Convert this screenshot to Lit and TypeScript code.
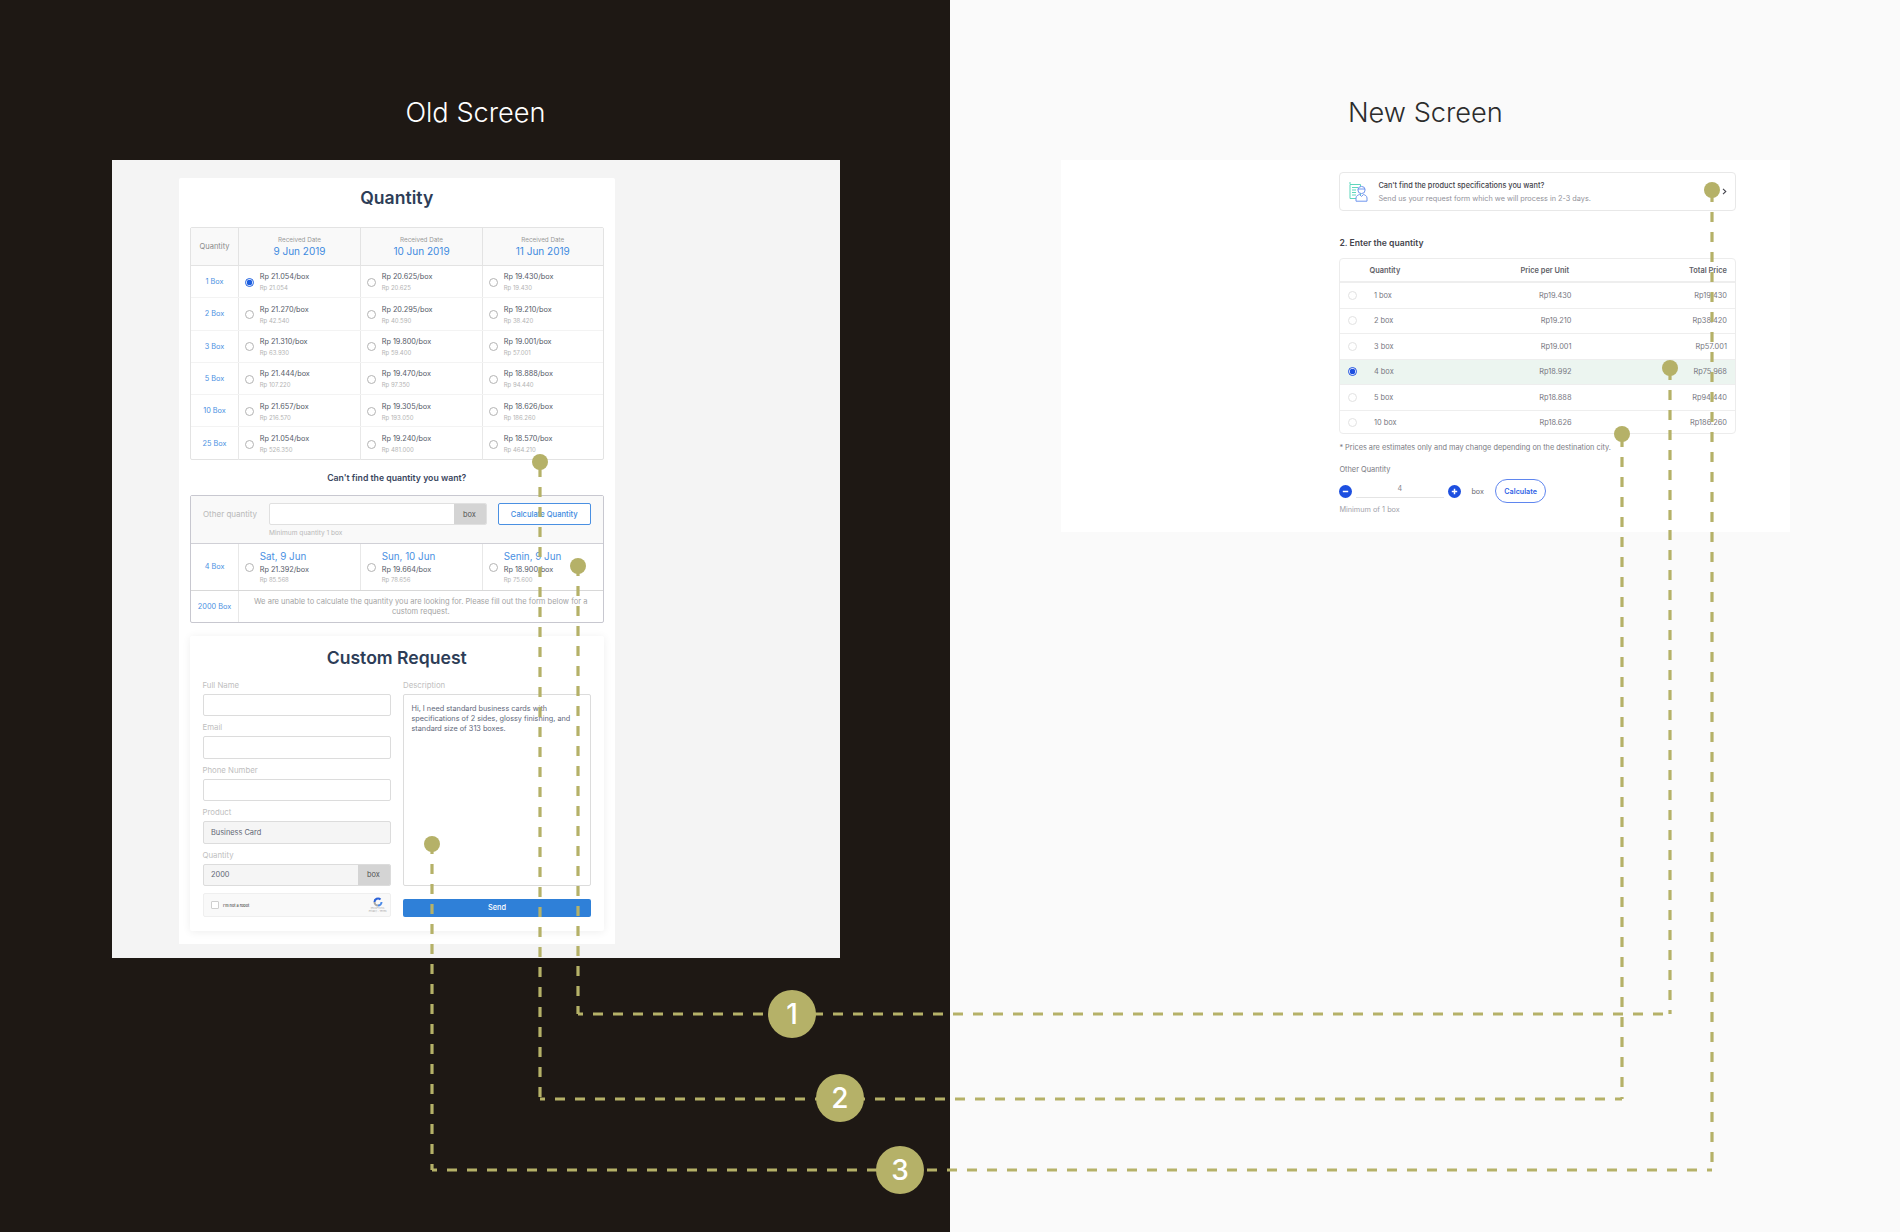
import { LitElement, html, css, svg } from "lit";
import { customElement } from "lit/decorators.js";

const oldRows = [
  ["1 Box", ["Rp 21.054/box", "Rp 21.054"], ["Rp 20.625/box", "Rp 20.625"], ["Rp 19.430/box", "Rp 19.430"]],
  ["2 Box", ["Rp 21.270/box", "Rp 42.540"], ["Rp 20.295/box", "Rp 40.590"], ["Rp 19.210/box", "Rp 38.420"]],
  ["3 Box", ["Rp 21.310/box", "Rp 63.930"], ["Rp 19.800/box", "Rp 59.400"], ["Rp 19.001/box", "Rp 57.001"]],
  ["5 Box", ["Rp 21.444/box", "Rp 107.220"], ["Rp 19.470/box", "Rp 97.350"], ["Rp 18.888/box", "Rp 94.440"]],
  ["10 Box", ["Rp 21.657/box", "Rp 216.570"], ["Rp 19.305/box", "Rp 193.050"], ["Rp 18.626/box", "Rp 186.260"]],
  ["25 Box", ["Rp 21.054/box", "Rp 526.350"], ["Rp 19.240/box", "Rp 481.000"], ["Rp 18.570/box", "Rp 464.210"]],
] as any[];

const newRows = [
  ["1 box", "Rp19.430", "Rp19.430"],
  ["2 box", "Rp19.210", "Rp38.420"],
  ["3 box", "Rp19.001", "Rp57.001"],
  ["4 box", "Rp18.992", "Rp75.968"],
  ["5 box", "Rp18.888", "Rp94.440"],
  ["10 box", "Rp18.626", "Rp186.260"],
];

const C = "#b5b168";
const leg = (d: string, offset = 0) =>
  svg`<path d=${d} fill="none" stroke=${C} stroke-width="3.2" stroke-dasharray="10 10" stroke-dashoffset=${offset}></path>`;
const pin = (x: number, y: number) => svg`<circle cx=${x} cy=${y} r="8" fill=${C}></circle>`;
const badge = (x: number, y: number, n: string) => svg`
  <circle cx=${x} cy=${y} r="24" fill=${C}></circle>
  <text x=${x} y=${y + 10} text-anchor="middle" fill="#fff" font-family="Inter, sans-serif" font-size="28" font-weight="500">${n}</text>`;

@customElement("app-root")
export class AppRoot extends LitElement {
  static styles = css`
    :host { display: block; width: 1900px; height: 1232px; position: relative; overflow: hidden; font-family: Inter, "Liberation Sans", sans-serif; }
    * { box-sizing: border-box; }
    .page { display: grid; grid-template-columns: 950px 950px; height: 1232px; }
    .side { height: 1232px; }
    .old { background: #1e1814; padding-left: 112px; }
    .new { background: #fafafa; padding-left: 111.4px; }
    .title { height: 160px; padding-top: 95.5px; font-size: 27.2px; line-height: 34px; font-weight: 300; text-align: center; color: #fff; }
    .old .title { width: 727px; }
    .new .title { width: 728px; color: #2c2c2c; }

    .oldpanel { width: 728px; height: 798px; background: #f4f4f4; padding: 18px 0 0 66.5px; }
    .card { width: 436.5px; height: 766px; background: #fff; padding: 0 11.5px 0 11.5px; border-radius: 2px 2px 0 0; }
    h2 { margin: 0; text-align: center; font-weight: 600; color: #2d3d57; font-size: 17.6px; height: 49px; line-height: 40px; }
    .grid { display: grid; grid-template-columns: 47px 122px 122px 1fr; }
    .tbl { border: 1px solid #e3e3e3; border-radius: 2px; height: 232.6px; }
    .thead { height: 38px; background: #f9f9f9; border-bottom: 1px solid #e3e3e3; }
    .thead > div { display: flex; flex-direction: column; align-items: center; justify-content: center; }
    .thead > div + div { border-left: 1px solid #e3e3e3; }
    .q { font-size: 7.5px; color: #8a8a8a; }
    .rd { font-size: 6.3px; line-height: 10px; color: #9a9a9a; }
    .dt { font-size: 10px; line-height: 13px; color: #3d8ae0; }
    .row { height: 32.3px; border-bottom: 1px solid #f3f3f3; }
    .row:last-child { border-bottom: 0; }
    .box { display: flex; align-items: center; justify-content: center; font-size: 7.3px; color: #4a90e2; height: 100%; }
    .cell { display: flex; align-items: center; gap: 6.2px; padding: 1.5px 0 0 5.5px; border-left: 1px solid #e8e8e8; height: 100%; }
    .radio { flex: none; width: 9px; height: 9px; border-radius: 50%; border: 1px solid #b4b4b4; background: #fff; display: block; }
    .radio.on { border-color: #1d5fe0; background: radial-gradient(circle, #1d5fe0 0 2.6px, #fff 3.1px); }
    .main { font-size: 7.3px; line-height: 11px; color: #555a68; white-space: nowrap; }
    .sub { font-size: 6px; line-height: 11px; color: #b4b4b4; white-space: nowrap; }

    .ask { height: 35px; line-height: 36px; text-align: center; font-size: 8.7px; font-weight: 600; color: #3a4660; }
    .other { border: 1px solid #c8c8d0; border-radius: 2px; height: 128px; }
    .orow { height: 48px; background: #f9f9f9; border-bottom: 1px solid #d0d0d6; display: flex; padding: 7.5px 0 0 12px; }
    .olabel { width: 66px; height: 22px; line-height: 22px; font-size: 8px; color: #b8b8b8; white-space: nowrap; }
    .ofield { width: 217.5px; }
    .inp { display: flex; height: 22px; background: #fff; border: 1px solid #e0e0e0; border-radius: 2px; overflow: hidden; }
    .inp i { flex: 1; }
    .unit { width: 32px; background: #d4d4d4; display: flex; align-items: center; justify-content: center; font-size: 7.4px; font-style: normal; color: #555; }
    .min { font-size: 6.6px; line-height: 14px; color: #b8b8b8; margin-top: 0.5px; }
    .calc { margin-left: 11.5px; width: 92.5px; height: 22px; border: 1px solid #4a90e2; border-radius: 2px; display: flex; align-items: center; justify-content: center; font-size: 7.6px; font-weight: 500; color: #3d8ae0; background: #fff; }
    .row4 { height: 47px; border-bottom: 1px solid #d8d8d8; }
    .date { font-size: 9.8px; line-height: 13px; color: #4a90e2; white-space: nowrap; }
    .row4 .main { margin-top: 1px; }
    .row4 .sub { line-height: 10px; }
    .row2k { height: 31px; }
    .msg { grid-column: 2 / 5; border-left: 1px solid #e8e8e8; display: flex; align-items: center; justify-content: center; text-align: center; padding: 1px 8px 0; font-size: 7.55px; line-height: 10px; color: #a4a4a4; }

    .custom { margin-top: 13px; height: 295px; background: #fff; border-radius: 2px; box-shadow: 0 1px 8px rgba(0,0,0,.07); padding: 0 12.5px; }
    .custom h2 { height: 42px; line-height: 42px; padding-top: 1px; font-size: 17.6px; }
    .form { display: grid; grid-template-columns: 188px 188px; column-gap: 12.5px; }
    .field { height: 42.5px; }
    .lbl { display: block; font-size: 7.8px; height: 16px; line-height: 15px; color: #c0c0c0; }
    .text { height: 22.5px; border: 1px solid #dcdcdc; border-radius: 2px; background: #fff; display: flex; align-items: center; overflow: hidden; font-size: 7.4px; color: #5f6674; padding-left: 7.5px; }
    .text.dis { background: #f5f5f5; }
    .text.dis .u2 { margin-left: auto; width: 32px; height: 100%; background: #d4d4d4; display: flex; align-items: center; justify-content: center; color: #555; }
    .captcha { margin-top: 3px; height: 24px; background: #f9f9f9; border: 1px solid #efefef; border-radius: 2px; display: flex; align-items: center; padding: 0 3px 0 7px; }
    .check { width: 8px; height: 8px; border: 1px solid #cfcfcf; background: #fff; border-radius: 1px; }
    .robot { margin-left: 4.5px; font-size: 3.8px; color: #444; font-weight: 500; white-space: nowrap; }
    .cap { margin-left: auto; display: flex; flex-direction: column; align-items: center; }
    .cap span { font-size: 2.4px; line-height: 3px; color: #a8a8a8; white-space: nowrap; }
    .area { height: 192px; border: 1px solid #dcdcdc; border-radius: 2px; background: #fff; padding: 9px 7px 0 7.5px; font-size: 7.3px; line-height: 10px; color: #60677a; }
    .send { margin-top: 13px; height: 18px; background: #2f80d8; border-radius: 2px; color: #fff; display: flex; align-items: center; justify-content: center; font-size: 7.4px; font-weight: 500; }

    .newpanel { width: 728.6px; height: 372px; background: #fff; padding: 12px 0 0 278px; }
    .wrap { width: 397px; }
    .banner { height: 38.5px; border: 1px solid #e8e8e8; border-radius: 4px; display: flex; align-items: center; padding: 1px 8px 0 9px; }
    .btext { margin-left: 9px; flex: 1; }
    .b1 { font-size: 7.35px; line-height: 13px; font-weight: 500; color: #44444c; white-space: nowrap; }
    .b2 { font-size: 7.3px; line-height: 13px; color: #92929a; white-space: nowrap; }
    .chev { display: block; }
    .head2 { height: 47.5px; padding-top: 25.5px; font-size: 8.6px; line-height: 14px; font-weight: 600; color: #44444c; }
    .ntbl { height: 176px; border: 1px solid #ececec; border-radius: 4px; overflow: hidden; }
    .nrow { height: 25.5px; display: grid; grid-template-columns: 1fr auto; align-items: center; border-top: 1px solid #eee; padding-right: 8.5px; font-size: 7.4px; color: #787882; }
    .nhead { height: 23px; border-top: 0; border-bottom: 1px solid #eee; font-weight: 600; color: #5f5f68; }
    .nrow > div { text-align: right; }
    .nrow > .ql { text-align: left; display: flex; align-items: center; }
    .nrow.sel { background: #ecf5f0; }
    .nrow .radio { margin-left: 8px; border-color: #e2e2e2; }
    .nrow .radio.on { border-color: #1d4fe0; background: radial-gradient(circle, #1d4fe0 0 2.6px, #fff 3.1px); }
    .q1 { margin-left: 16.6px; width: 197.5px; display: flex; justify-content: space-between; }
    .qh { margin-left: 29.2px; width: 199.5px; display: flex; justify-content: space-between; }
    .note { margin-top: 8px; font-size: 7.33px; line-height: 12px; color: #7a7a82; white-space: nowrap; }
    .olab { margin-top: 10px; font-size: 7.4px; line-height: 12px; color: #7a7a82; }
    .ctrl { margin-top: 3px; height: 24px; display: flex; align-items: center; }
    .pm { flex: none; width: 13px; height: 13px; border-radius: 50%; background: #1d4fe0; display: block; }
    .num { margin-left: 3.5px; margin-right: 4px; width: 88px; height: 14px; border-bottom: 1px solid #e4e4e4; text-align: center; font-size: 7.2px; line-height: 10px; color: #85858d; }
    .bx { margin-left: 10.5px; width: 13px; font-size: 7.2px; color: #6a6a72; }
    .cbtn { margin-left: 10.5px; width: 51.5px; height: 24px; border: 1px solid #5f86ef; border-radius: 12px; display: flex; align-items: center; justify-content: center; font-size: 7.2px; font-weight: 600; color: #2f5fe6; }
    .min2 { margin-top: 1px; font-size: 7.3px; line-height: 12px; color: #a2a2aa; }
    .over { position: absolute; left: 0; top: 0; pointer-events: none; }
  `;

  private oldTable() {
    return html`<div class="tbl">
      <div class="grid thead">
        <div class="q">Quantity</div>
        ${["9 Jun 2019", "10 Jun 2019", "11 Jun 2019"].map(
          (d) => html`<div><span class="rd">Received Date</span><span class="dt">${d}</span></div>`
        )}
      </div>
      ${oldRows.map(
        (r, i) => html`<div class="grid row">
          <div class="box">${r[0]}</div>
          ${[r[1], r[2], r[3]].map(
            (c: string[], j: number) => html`<div class="cell">
              <span class="radio ${i === 0 && j === 0 ? "on" : ""}"></span>
              <div><div class="main">${c[0]}</div><div class="sub">${c[1]}</div></div>
            </div>`
          )}
        </div>`
      )}
    </div>`;
  }

  private otherBox() {
    const four = [
      ["Sat, 9 Jun", "Rp 21.392/box", "Rp 85.568"],
      ["Sun, 10 Jun", "Rp 19.664/box", "Rp 78.656"],
      ["Senin, 9 Jun", "Rp 18.900/box", "Rp 75.600"],
    ];
    return html`<div class="other">
      <div class="orow">
        <div class="olabel">Other quantity</div>
        <div class="ofield">
          <div class="inp"><i></i><em class="unit">box</em></div>
          <div class="min">Minimum quantity 1 box</div>
        </div>
        <div class="calc">Calculate Quantity</div>
      </div>
      <div class="grid row4">
        <div class="box">4 Box</div>
        ${four.map(
          (c) => html`<div class="cell">
            <span class="radio"></span>
            <div><div class="date">${c[0]}</div><div class="main">${c[1]}</div><div class="sub">${c[2]}</div></div>
          </div>`
        )}
      </div>
      <div class="grid row2k">
        <div class="box">2000 Box</div>
        <div class="msg">We are unable to calculate the quantity you are looking for. Please fill out the form below for a custom request.</div>
      </div>
    </div>`;
  }

  private customForm() {
    const f = (label: string, inner: unknown = html``, cls = "") =>
      html`<div class="field"><span class="lbl">${label}</span><div class="text ${cls}">${inner}</div></div>`;
    return html`<div class="custom">
      <h2>Custom Request</h2>
      <div class="form">
        <div>
          ${f("Full Name")} ${f("Email")} ${f("Phone Number")}
          ${f("Product", "Business Card", "dis")}
          ${f("Quantity", html`2000<span class="u2">box</span>`, "dis")}
          <div class="captcha">
            <span class="check"></span><span class="robot">I'm not a robot</span>
            <div class="cap">
              <svg width="10" height="10" viewBox="0 0 10 10">
                <path d="M1.5 5a3.5 3.5 0 0 1 6-2.5" fill="none" stroke="#2b62d8" stroke-width="2"></path>
                <path d="M8.5 5a3.5 3.5 0 0 1-3.5 3.5" fill="none" stroke="#4a8ae8" stroke-width="2"></path>
                <path d="M5 8.5A3.5 3.5 0 0 1 1.5 5" fill="none" stroke="#a8a8a8" stroke-width="2"></path>
              </svg>
              <span>reCAPTCHA</span><span>Privacy - Terms</span>
            </div>
          </div>
        </div>
        <div>
          <span class="lbl">Description</span>
          <div class="area">Hi, I need standard business cards with specifications of 2 sides, glossy finishing, and standard size of 313 boxes.</div>
          <div class="send">Send</div>
        </div>
      </div>
    </div>`;
  }

  private newSide() {
    return html`<div class="newpanel"><div class="wrap">
      <div class="banner">
        <svg width="20" height="20" viewBox="0 0 20 20" fill="none">
          <path d="M1 2.5h10.5v14H1z" stroke="#5fd6bd" stroke-width="1"></path>
          <path d="M0 1h2M3 5.5h6M3 8h4M3 10.5h4M3 13h4" stroke="#5fd6bd" stroke-width="1"></path>
          <circle cx="12.5" cy="8" r="3.6" stroke="#6f95ee" stroke-width="1" fill="#fff"></circle>
          <path d="M8.8 7h7.4" stroke="#6f95ee" stroke-width="1"></path>
          <path d="M7 19.2v-3.2c0-2 2-3.2 3.6-3.4l1.9 1.8 1.9-1.8c1.6.2 3.6 1.4 3.6 3.4v3.2z" stroke="#6f95ee" stroke-width="1" fill="#fff"></path>
        </svg>
        <div class="btext">
          <div class="b1">Can't find the product specifications you want?</div>
          <div class="b2">Send us your request form which we will process in 2-3 days.</div>
        </div>
        <svg class="chev" width="5" height="7" viewBox="0 0 5 7" fill="none"><path d="M1 .8 3.8 3.5 1 6.2" stroke="#44444c" stroke-width="1.1"></path></svg>
      </div>
      <div class="head2">2. Enter the quantity</div>
      <div class="ntbl">
        <div class="nrow nhead">
          <div class="ql qh"><span>Quantity</span><span>Price per Unit</span></div>
          <div>Total Price</div>
        </div>
        ${newRows.map(
          (r, i) => html`<div class="nrow ${i === 3 ? "sel" : ""}">
            <div class="ql"><span class="radio ${i === 3 ? "on" : ""}"></span><div class="q1"><span>${r[0]}</span><span>${r[1]}</span></div></div>
            <div>${r[2]}</div>
          </div>`
        )}
      </div>
      <div class="note">* Prices are estimates only and may change depending on the destination city.</div>
      <div class="olab">Other Quantity</div>
      <div class="ctrl">
        <svg class="pm" viewBox="0 0 13 13"><path d="M3.8 6.5h5.4" stroke="#fff" stroke-width="1.5"></path></svg>
        <div class="num">4</div>
        <svg class="pm" viewBox="0 0 13 13"><path d="M3.8 6.5h5.4M6.5 3.8v5.4" stroke="#fff" stroke-width="1.5"></path></svg>
        <div class="bx">box</div>
        <div class="cbtn">Calculate</div>
      </div>
      <div class="min2">Minimum of 1 box</div>
    </div></div>`;
  }

  render() {
    return html`<div class="page">
        <section class="side old">
          <div class="title">Old Screen</div>
          <div class="oldpanel"><div class="card">
            <h2>Quantity</h2>
            ${this.oldTable()}
            <div class="ask">Can't find the quantity you want?</div>
            ${this.otherBox()}
            ${this.customForm()}
          </div></div>
        </section>
        <section class="side new">
          <div class="title">New Screen</div>
          ${this.newSide()}
        </section>
      </div>
      <svg class="over" width="1900" height="1232" viewBox="0 0 1900 1232">
        ${leg("M578 566V1014")} ${leg("M578 1014H1670", 5)} ${leg("M1670 370V1014")}
        ${leg("M540 467V1099")} ${leg("M540 1099H1622", 5)} ${leg("M1622 437V1099")}
        ${leg("M432 844V1170")} ${leg("M432 1170H1712", 5)} ${leg("M1712 192V1170")}
        ${pin(578, 566)} ${pin(540, 462)} ${pin(432, 844)}
        ${pin(1670, 368)} ${pin(1622, 434)} ${pin(1712, 190)}
        ${badge(792, 1014, "1")} ${badge(840, 1098, "2")} ${badge(900, 1170, "3")}
      </svg>`;
  }
}
